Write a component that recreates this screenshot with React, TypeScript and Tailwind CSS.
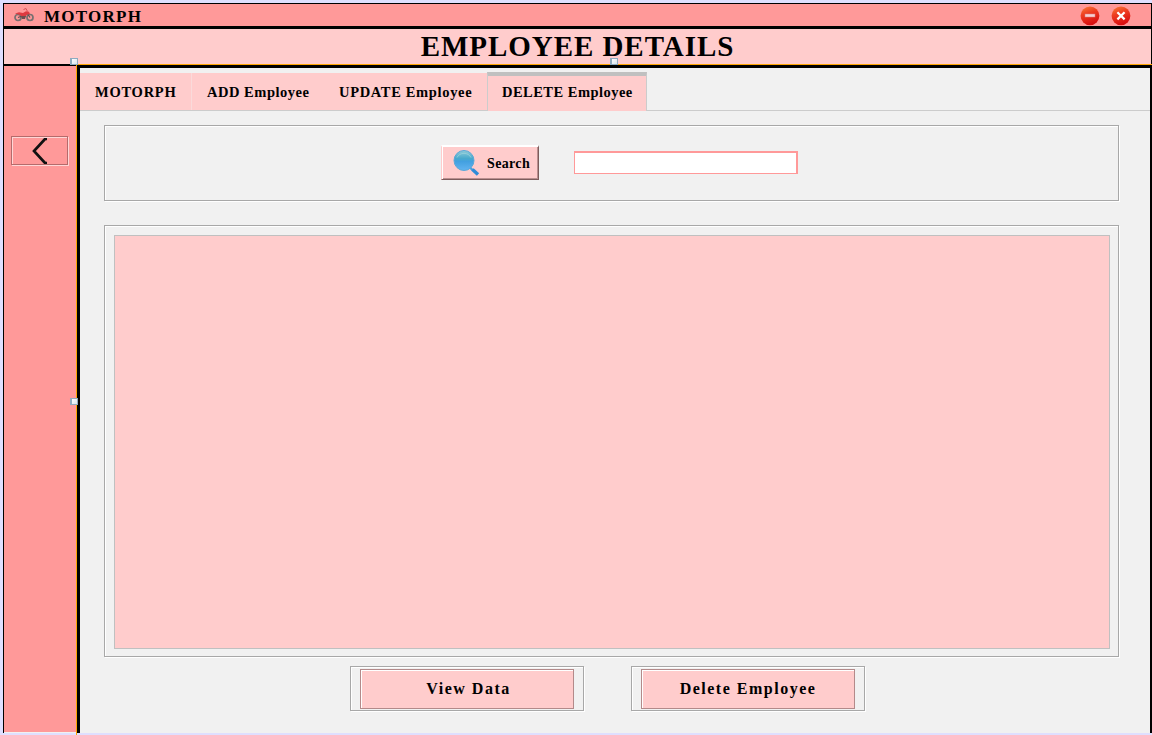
import React from "react";

const serif = "font-['Liberation_Serif',serif] font-bold text-black whitespace-nowrap leading-none";

function MotorcycleIcon() {
  return (
    <svg width="20" height="14" viewBox="0 0 20 14" fill="none">
      <circle cx="4" cy="9.5" r="3" stroke="#777070" strokeWidth="1.7" />
      <circle cx="16" cy="9.5" r="3" stroke="#777070" strokeWidth="1.7" />
      <path d="M4 9.5L8 8h3l2-3 3 4.5" stroke="#5c5050" strokeWidth="1.2" />
      <path d="M1 5.5l4-1.2 4 .8 3-1.8 3 .4 1 2.5-3 .3-2 2.5H8L6 7z" fill="#dd3a40" />
      <path d="M9.5 1.5L12 .5l1.5 3" stroke="#d65358" strokeWidth="1" />
      <path d="M7 8h5l-1 3H8z" fill="#6b4f4f" />
    </svg>
  );
}

function WindowButton({ kind }: { kind: "minimize" | "close" }) {
  const id = `glow-${kind}`;
  return (
    <svg width="20" height="20" viewBox="0 0 20 20">
      <defs>
        <linearGradient id={id} x1="0" y1="0" x2="0.35" y2="1">
          <stop offset="0" stopColor="#f8823c" />
          <stop offset="0.45" stopColor="#ee3d20" />
          <stop offset="1" stopColor="#d80f10" />
        </linearGradient>
      </defs>
      <circle cx="10" cy="9.8" r="9.4" fill={`url(#${id})`} />
      {kind === "minimize" ? (
        <rect x="5" y="8" width="10" height="3" fill="#f7cfd0" stroke="#d88080" strokeWidth="0.5" />
      ) : (
        <path d="M6.4 6.2l7.2 7.2M13.6 6.2l-7.2 7.2" stroke="#fff" strokeWidth="2.2" />
      )}
    </svg>
  );
}

function SearchIcon() {
  return (
    <svg width="27" height="27" viewBox="0 0 27 27">
      <defs>
        <linearGradient id="lens" x1="0" y1="0" x2="0" y2="1">
          <stop offset="0" stopColor="#8fcbd8" />
          <stop offset="0.4" stopColor="#48a9cc" />
          <stop offset="0.55" stopColor="#43a0e0" />
          <stop offset="1" stopColor="#62b4f0" />
        </linearGradient>
      </defs>
      <path d="M17 17.5l3 3" stroke="#489fe0" strokeWidth="2.4" />
      <path d="M19.5 19.5l5.5 5" stroke="#2f8cd8" strokeWidth="3.4" />
      <circle cx="11" cy="10.5" r="10" fill="url(#lens)" stroke="#5aa8d8" strokeWidth="1" />
      <path d="M4 7.5A8 8 0 0 1 18 7.5" stroke="#9bd2dc" strokeWidth="0.8" fill="none" />
    </svg>
  );
}

function Handle({ place }: { place: string }) {
  return (
    <span className={`absolute h-[7px] w-2 border border-l-2 border-[#8eabc0] bg-linear-to-br from-white to-[#d8e4ec] ${place}`} />
  );
}

function EtchedPanel({ className, children }: { className: string; children?: React.ReactNode }) {
  return (
    <div className={`border border-[#a8a8a8] shadow-[inset_1px_1px_0_#fff,1px_1px_0_#fff] ${className}`}>
      {children}
    </div>
  );
}

function ActionButton({ label, spacing }: { label: string; spacing: string }) {
  return (
    <EtchedPanel className="flex h-[45px] w-[234px] pt-[2px] pl-[9px]">
      <button className="flex h-10 w-[214px] items-center justify-center border border-[#b38a8a] bg-[#ffcccc] shadow-[inset_1px_1px_0_#fff]">
        <span className={`${serif} text-[16px] ${spacing}`}>{label}</span>
      </button>
    </EtchedPanel>
  );
}

export default function App() {
  return (
    <div className="flex h-[735px] w-[1152px] flex-col overflow-hidden bg-[#dfdfff] pt-[3px] pl-[3px]">
      <header className="flex h-[26px] w-full shrink-0 items-center border-t border-r border-b-[3px] border-l border-black bg-[#ff9999] pl-[10px]">
        <MotorcycleIcon />
        <span className={`${serif} ml-[10px] pt-[2px] text-[17px] tracking-[1.25px]`}>MOTORPH</span>
        <div className="ml-auto mr-5 flex gap-[11px] pt-[2px]">
          <WindowButton kind="minimize" />
          <WindowButton kind="close" />
        </div>
      </header>

      <div className="flex h-[35px] shrink-0 justify-center border-x border-black bg-[#ffcccc] pt-[3px]">
        <h1 className={`${serif} text-[29px] tracking-[0.96px]`}>EMPLOYEE DETAILS</h1>
      </div>

      <div className="relative flex min-h-0 flex-1">
        <aside className="h-[669px] w-[73px] shrink-0 border-t-2 border-l border-t-black border-l-black bg-[#ff9999] pt-[70px] pl-[7px] shadow-[inset_0_-1px_0_#f1f1f1]">
          <button className="flex h-[29px] w-[57px] items-center justify-center border border-[#b56b6b] pt-px shadow-[inset_1px_1px_0_#ffd6d6,1px_1px_0_#ffd6d6]">
            <svg width="16" height="26" viewBox="0 0 16 26" fill="none">
              <path d="M15 1h-2L2 13l11 12h2" stroke="#111" strokeWidth="2.7" />
            </svg>
          </button>
        </aside>

        <div className="flex min-w-0 flex-1 flex-col border-t border-l border-[#ffa500]">
          <main className="h-[668px] border-t-[3px] border-r-2 border-l-[3px] border-black bg-[#f1f1f1]">
            <nav className="flex h-[43px] items-end border-b border-[#cccccc] pt-1">
              <div className="flex h-[37px] w-[112px] items-center border-r border-[#fadada] bg-[#ffcccc] pt-[2px] pl-[15px]">
                <span className={`${serif} text-[14.5px] tracking-[0.75px]`}>MOTORPH</span>
              </div>
              <div className="flex h-[37px] w-[132px] items-center bg-[#ffcccc] pt-[2px] pl-[15px]">
                <span className={`${serif} text-[14.5px] tracking-[0.52px]`}>ADD Employee</span>
              </div>
              <div className="flex h-[37px] w-[163px] items-center bg-[#ffcccc] pt-[2px] pl-[15px]">
                <span className={`${serif} text-[14.5px] tracking-[0.66px]`}>UPDATE Employee</span>
              </div>
              <div className="-mb-px flex h-[39px] w-[160px] items-center border-x border-t-4 border-x-[#cccccc] border-t-[#c0c0c0] bg-[#ffcccc] pb-[2px] pl-[14px]">
                <span className={`${serif} text-[14.5px] tracking-[0.47px]`}>DELETE Employee</span>
              </div>
            </nav>

            <section className="flex flex-col pt-[14px] pl-6">
              <EtchedPanel className="flex h-[76px] w-[1015px] items-start pl-[336px]">
                <button className="mt-[19px] flex h-[35px] w-[98px] items-center border-t-2 border-r border-b border-l border-t-white border-r-[#7d5c5c] border-b-[#7d5c5c] border-l-[#ffcccc] bg-[#ffcccc] pl-[11px] shadow-[inset_1px_0_0_#fff,inset_-1px_-1px_0_#b98f8f]">
                  <SearchIcon />
                  <span className={`${serif} ml-[7px] pt-px text-[14px] tracking-[0.35px]`}>Search</span>
                </button>
                <input
                  aria-label="Search"
                  className="mt-[25px] ml-[35px] h-[23px] w-[224px] border-t-2 border-r-2 border-b border-l border-[#ff9999] bg-white outline-none"
                />
              </EtchedPanel>

              <EtchedPanel className="mt-6 h-[432px] w-[1015px] p-[9px] pr-2 pb-[7px]">
                <div className="h-full border border-[#c0c0c0] bg-[#ffcccc]" />
              </EtchedPanel>

              <div className="mt-[9px] ml-[246px] flex gap-[47px]">
                <ActionButton label="View Data" spacing="pl-[3px] tracking-[1.5px]" />
                <ActionButton label="Delete Employee" spacing="tracking-[1.5px]" />
              </div>
            </section>
          </main>
        </div>

        <Handle place="-top-[6px] left-[67px]" />
        <Handle place="-top-[6px] left-[607px]" />
        <Handle place="top-[334px] left-[67px]" />
      </div>
    </div>
  );
}
